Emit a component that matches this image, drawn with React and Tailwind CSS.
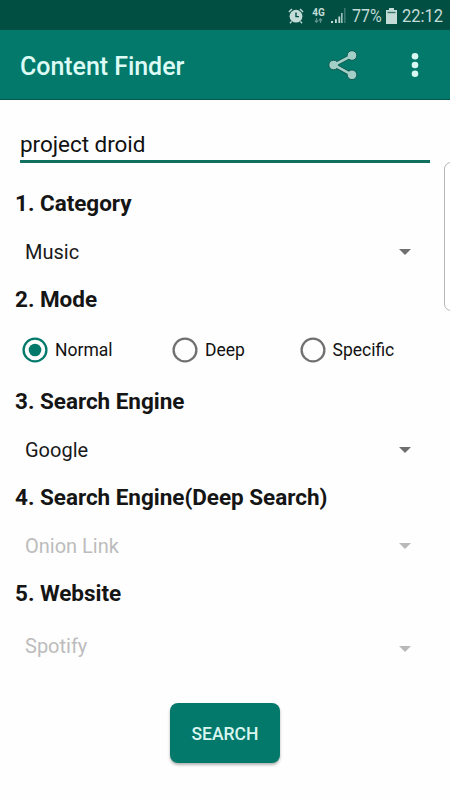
import { useState } from "react";

const StatusBar = () => (
    <div className="flex h-[30px] items-center bg-[#014e42] pt-[1px] pl-[288px] text-[#c3dcd7]">
        <svg width="16" height="16" viewBox="0 0 16 16" fill="none" className="shrink-0">
            <circle cx="8" cy="8.2" r="6.4" fill="currentColor" />
            <path d="M8 4.6v4h3" stroke="#014e42" strokeWidth="1.4" />
            <path d="M.9 4 4 1M15.1 4 12 1M3.6 13.4 2 15.2M12.4 13.4l1.6 1.8" stroke="currentColor" strokeWidth="1.4" />
        </svg>
        <div className="ml-[8px] flex w-[13px] shrink-0 flex-col items-center">
            <span className="text-[10px] leading-[9px] font-bold">4G</span>
            <svg width="9" height="5" viewBox="0 0 9 5" fill="none" stroke="#5d9187" strokeWidth="1.3" className="mt-px">
                <path d="M2.5 0v4M1 2.5l1.5 1.7L4 2.5M6.5 5V1M5 2.5 6.5.8 8 2.5" />
            </svg>
        </div>
        <svg width="15" height="15" viewBox="0 0 15 15" className="ml-[6px] shrink-0" fill="currentColor">
            <path d="M0 13h2v2H0zM4 11.2h1.8V15H4zM7.4 8.4h1.8V15H7.4zM10.2 5h1.3v10h-1.3z" />
            <path d="M13 0h1.6v15H13z" opacity=".3" />
        </svg>
        <div className="ml-[6px] w-[30px] shrink-0">
            <span className="inline-block origin-left scale-x-[0.84] text-[19px] leading-[29px]">77%</span>
        </div>
        <svg width="11" height="16" viewBox="0 0 11 16" className="ml-[4px] shrink-0" fill="currentColor">
            <path d="M3 0h5v2h3v14H0V2h3z" />
            <path d="M1.5 3.8h8v1.4h-8z" fill="#36766b" />
        </svg>
        <div className="ml-[4.5px] w-[42px] shrink-0">
            <span className="inline-block origin-left scale-x-[0.87] text-[19px] leading-[29px]">22:12</span>
        </div>
    </div>
);

const AppBar = () => (
    <header className="flex h-[70px] items-center border-b border-[#03594e] bg-[#03796b] pl-5">
        <h1 className="w-[308px] pt-[4px] text-[25px] leading-[30px] font-medium tracking-[-0.05px] text-[#dcfbf5]">Content Finder</h1>
        <button aria-label="Share">
            <svg width="30" height="32" viewBox="0 0 30 32">
                <path d="M24 6.5 6 16l18 9.8" fill="none" stroke="#0b5249" strokeWidth="4.2" />
                <g fill="#a3cfc8" stroke="#0b5249" strokeWidth=".9">
                    <circle cx="24" cy="6.5" r="4.8" />
                    <circle cx="5.6" cy="16" r="4.8" />
                    <circle cx="24" cy="25.8" r="4.8" />
                </g>
                <path d="M24 6.5 6 16l18 9.8" fill="none" stroke="#a3cfc8" strokeWidth="2.6" />
            </svg>
        </button>
        <button aria-label="More options" className="ml-[53px]">
            <svg width="8" height="26" viewBox="0 0 8 26" fill="#d8f8f3">
                <circle cx="4" cy="4.2" r="3.3" />
                <circle cx="4" cy="13" r="3.3" />
                <circle cx="4" cy="21.8" r="3.3" />
            </svg>
        </button>
    </header>
);

const Heading = ({ children }) => (
    <h2 className="h-12 pl-[15px] text-[22.5px] leading-[48px] font-bold tracking-[-0.03px] text-[#151515]">{children}</h2>
);

const Spinner = ({ value, disabled, className = "h-12 pt-[2px]", arrowClass = "" }) => (
    <div className={`flex items-center justify-between pr-[39px] pl-[25px] ${disabled ? "text-[#bcbcbc]" : "text-[#191919]"} ${className}`}>
        <span className="text-[20px] leading-6">{value}</span>
        <svg width="12" height="6" viewBox="0 0 12 6" className={`${disabled ? "fill-[#b9b9b9]" : "fill-[#6f6f6f]"} ${arrowClass}`}>
            <path d="M0 0h12L6 6z" />
        </svg>
    </div>
);

const Radio = ({ label, checked, onSelect, className }) => (
    <button role="radio" aria-checked={checked} onClick={onSelect} className={`flex items-center gap-[7px] ${className}`}>
        <svg width="26" height="26" viewBox="0 0 26 26" fill="none">
            <circle cx="13" cy="13" r="11.4" stroke={checked ? "#03796b" : "#707070"} strokeWidth="2.3" />
            {checked && <circle cx="13" cy="13" r="6.3" fill="#03796b" />}
        </svg>
        <span className="text-[17.5px] leading-6 text-[#111]">{label}</span>
    </button>
);

const App = () => {
    const [query, setQuery] = useState("project droid");
    const [mode, setMode] = useState("Normal");

    return (
        <div className="relative h-[800px] w-[450px] overflow-hidden bg-[#fefefe] font-['Roboto',sans-serif]">
            <StatusBar />
            <AppBar />

            <main>
                <div className="px-5 pt-[27px]">
                    <input
                        value={query}
                        onChange={(e) => setQuery(e.target.value)}
                        className="block h-[36px] w-full border-b-[3px] border-[#12705f] text-[22.5px] tracking-[-0.05px] text-[#111] outline-none"
                    />
                </div>

                <div className="pt-4">
                    <Heading>1. Category</Heading>
                    <Spinner value="Music" />
                    <Heading>2. Mode</Heading>
                    <div role="radiogroup" className="flex h-[54px] items-center pl-[22px]">
                        <Radio label="Normal" checked={mode === "Normal"} onSelect={() => setMode("Normal")} className="w-[150px]" />
                        <Radio label="Deep" checked={mode === "Deep"} onSelect={() => setMode("Deep")} className="w-[127.5px]" />
                        <Radio label="Specific" checked={mode === "Specific"} onSelect={() => setMode("Specific")} className="w-[100px]" />
                    </div>
                    <Heading>3. Search Engine</Heading>
                    <Spinner value="Google" />
                    <Heading>4. Search Engine(Deep Search)</Heading>
                    <Spinner value="Onion Link" disabled />
                    <Heading>5. Website</Heading>
                    <Spinner value="Spotify" disabled className="h-[58px]" arrowClass="mt-[6px]" />
                </div>

                <div className="flex justify-center pt-[28px]">
                    <button className="h-[60px] w-[110px] rounded-[8px] bg-[#03796b] pt-[2px] text-[17.5px] font-medium text-[#d9f5f0] shadow-[0_2px_3px_rgba(0,0,0,0.3)]">
                        SEARCH
                    </button>
                </div>
            </main>

            {/* edge panel handle */}
            <div className="absolute top-[162px] left-[444px] h-[149px] w-5 rounded-[7px] border border-[#b5b5b5] bg-white" />
        </div>
    );
};

export default App;
